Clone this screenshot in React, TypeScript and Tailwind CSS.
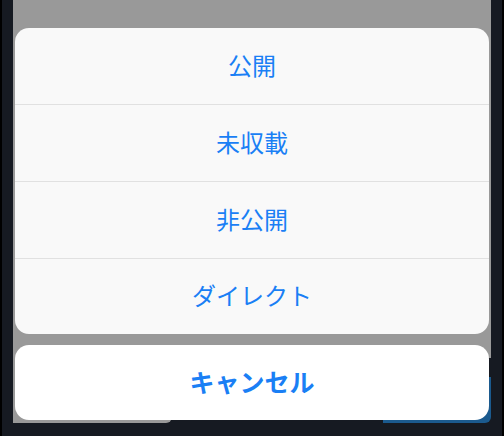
import React from "react";

const items = ["公開", "未収載", "非公開", "ダイレクト"];

export default function App() {
  return (
    <div
      className="relative w-[504px] h-[436px] overflow-hidden bg-[#161a22] border-l-2 border-r-2 border-black"
      style={{ fontFamily: '"Noto Sans CJK JP", "Noto Sans", sans-serif' }}
    >
      {/* dimmed background app */}
      <div className="ml-[11px] w-[478px] flex flex-col">
        <div className="h-[358px] bg-[#999999]" />
        <div className="flex justify-between">
          <div className="w-[159px] h-[65px] bg-[#999999] rounded-br-[6px]" />
          <div className="mt-[19px] w-[108px] h-[46px] bg-[#1b5a8e] rounded-tl-[8px] rounded-br-[6px]" />
        </div>
      </div>

      {/* action sheet overlay */}
      <div className="absolute left-[13px] top-[28px] w-[474px] flex flex-col gap-[11px]">
        <div className="bg-[#f9f9f9] rounded-[14px] overflow-hidden flex flex-col">
          {items.map((t, i) => (
            <div
              key={t}
              className={`flex items-center justify-center pb-[3px] text-[24px] leading-none text-[#1a7ff5] ${
                i < items.length - 1 ? "h-[77px] border-b border-[#e1e1e1]" : "h-[75px]"
              }`}
            >
              {t}
            </div>
          ))}
        </div>
        <div className="h-[75px] bg-white rounded-[14px] flex items-center justify-center pb-[2px] text-[25px] leading-none font-bold text-[#1a7ff5]">
          キャンセル
        </div>
      </div>
    </div>
  );
}
